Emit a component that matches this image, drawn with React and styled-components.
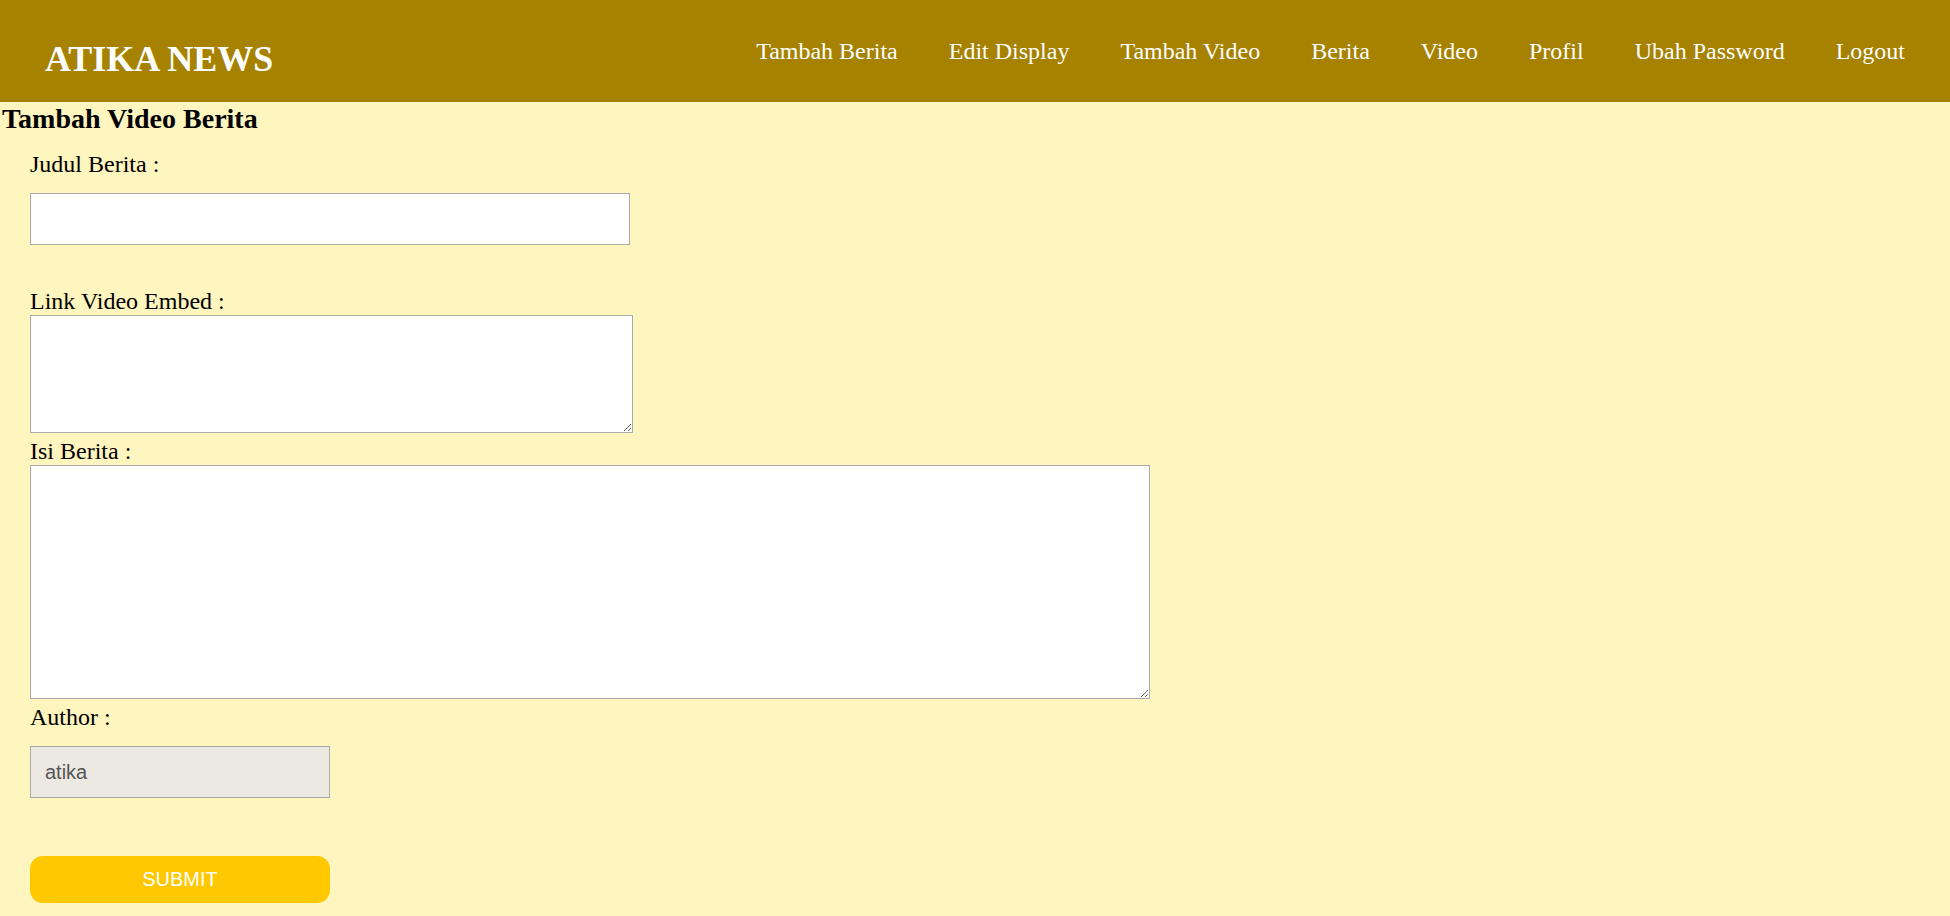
import React from "react";
import styled, { createGlobalStyle } from "styled-components";

const GlobalStyle = createGlobalStyle`
  body {
    margin: 0;
    background: #fff5bf;
    font-family: "Liberation Serif", "Times New Roman", serif;
    color: #000;
  }
`;

const Header = styled.header`
  display: flex;
  align-items: center;
  justify-content: space-between;
  height: 102px;
  padding: 0 45px;
  background: #a68200;
`;

const Logo = styled.h1`
  margin: 0;
  padding-top: 16px;
  font-size: 36px;
  font-weight: bold;
  line-height: normal;
  color: #fff;
`;

const Nav = styled.nav`
  display: flex;
  gap: 51px;
`;

const NavLink = styled.a`
  font-size: 24px;
  line-height: normal;
  color: #fff;
  text-decoration: none;
`;

const Title = styled.h2`
  margin: 0;
  padding: 1px 0 0 2px;
  font-size: 28px;
  font-weight: bold;
  line-height: normal;
`;

const Form = styled.form`
  padding: 16px 30px 20px;
`;

const Label = styled.label`
  display: block;
  margin-top: ${(p) => p.$gap || 0}px;
  font-size: 24px;
  line-height: normal;
`;

const TextInput = styled.input`
  display: block;
  box-sizing: border-box;
  margin-top: 15px;
  width: ${(p) => p.$width}px;
  height: 52px;
  padding: 0 14px;
  border: 1px solid #aaa;
  background: ${(p) => (p.readOnly ? "#ebe9e1" : "#fff")};
  color: #555;
  font-family: "Liberation Sans", Arial, sans-serif;
  font-size: 20px;
  outline: none;
`;

const TextArea = styled.textarea`
  display: block;
  box-sizing: border-box;
  width: ${(p) => p.$width}px;
  height: ${(p) => p.$height}px;
  border: 1px solid #aaa;
  background: #fff;
  font-family: "Liberation Mono", monospace;
  font-size: 14px;
  outline: none;
`;

const SubmitButton = styled.button`
  display: block;
  margin-top: 58px;
  width: 300px;
  height: 47px;
  border: none;
  border-radius: 13px;
  background: #ffc800;
  color: #fff;
  font-family: "Liberation Sans", Arial, sans-serif;
  font-size: 20px;
  cursor: pointer;
`;

const menu = [
  "Tambah Berita",
  "Edit Display",
  "Tambah Video",
  "Berita",
  "Video",
  "Profil",
  "Ubah Password",
  "Logout",
];

const App = () => {
  return (
    <>
      <GlobalStyle />
      <Header>
        <Logo>ATIKA NEWS</Logo>
        <Nav>
          {menu.map((item) => (
            <NavLink key={item} href="#">
              {item}
            </NavLink>
          ))}
        </Nav>
      </Header>
      <Title>Tambah Video Berita</Title>
      <Form onSubmit={(e) => e.preventDefault()}>
        <Label>Judul Berita :</Label>
        <TextInput type="text" $width={600} />
        <Label $gap={43}>Link Video Embed :</Label>
        <TextArea $width={603} $height={118} />
        <Label $gap={5}>Isi Berita :</Label>
        <TextArea $width={1120} $height={234} />
        <Label $gap={5}>Author :</Label>
        <TextInput type="text" $width={300} value="atika" readOnly />
        <SubmitButton type="submit">SUBMIT</SubmitButton>
      </Form>
    </>
  );
};

export default App;
